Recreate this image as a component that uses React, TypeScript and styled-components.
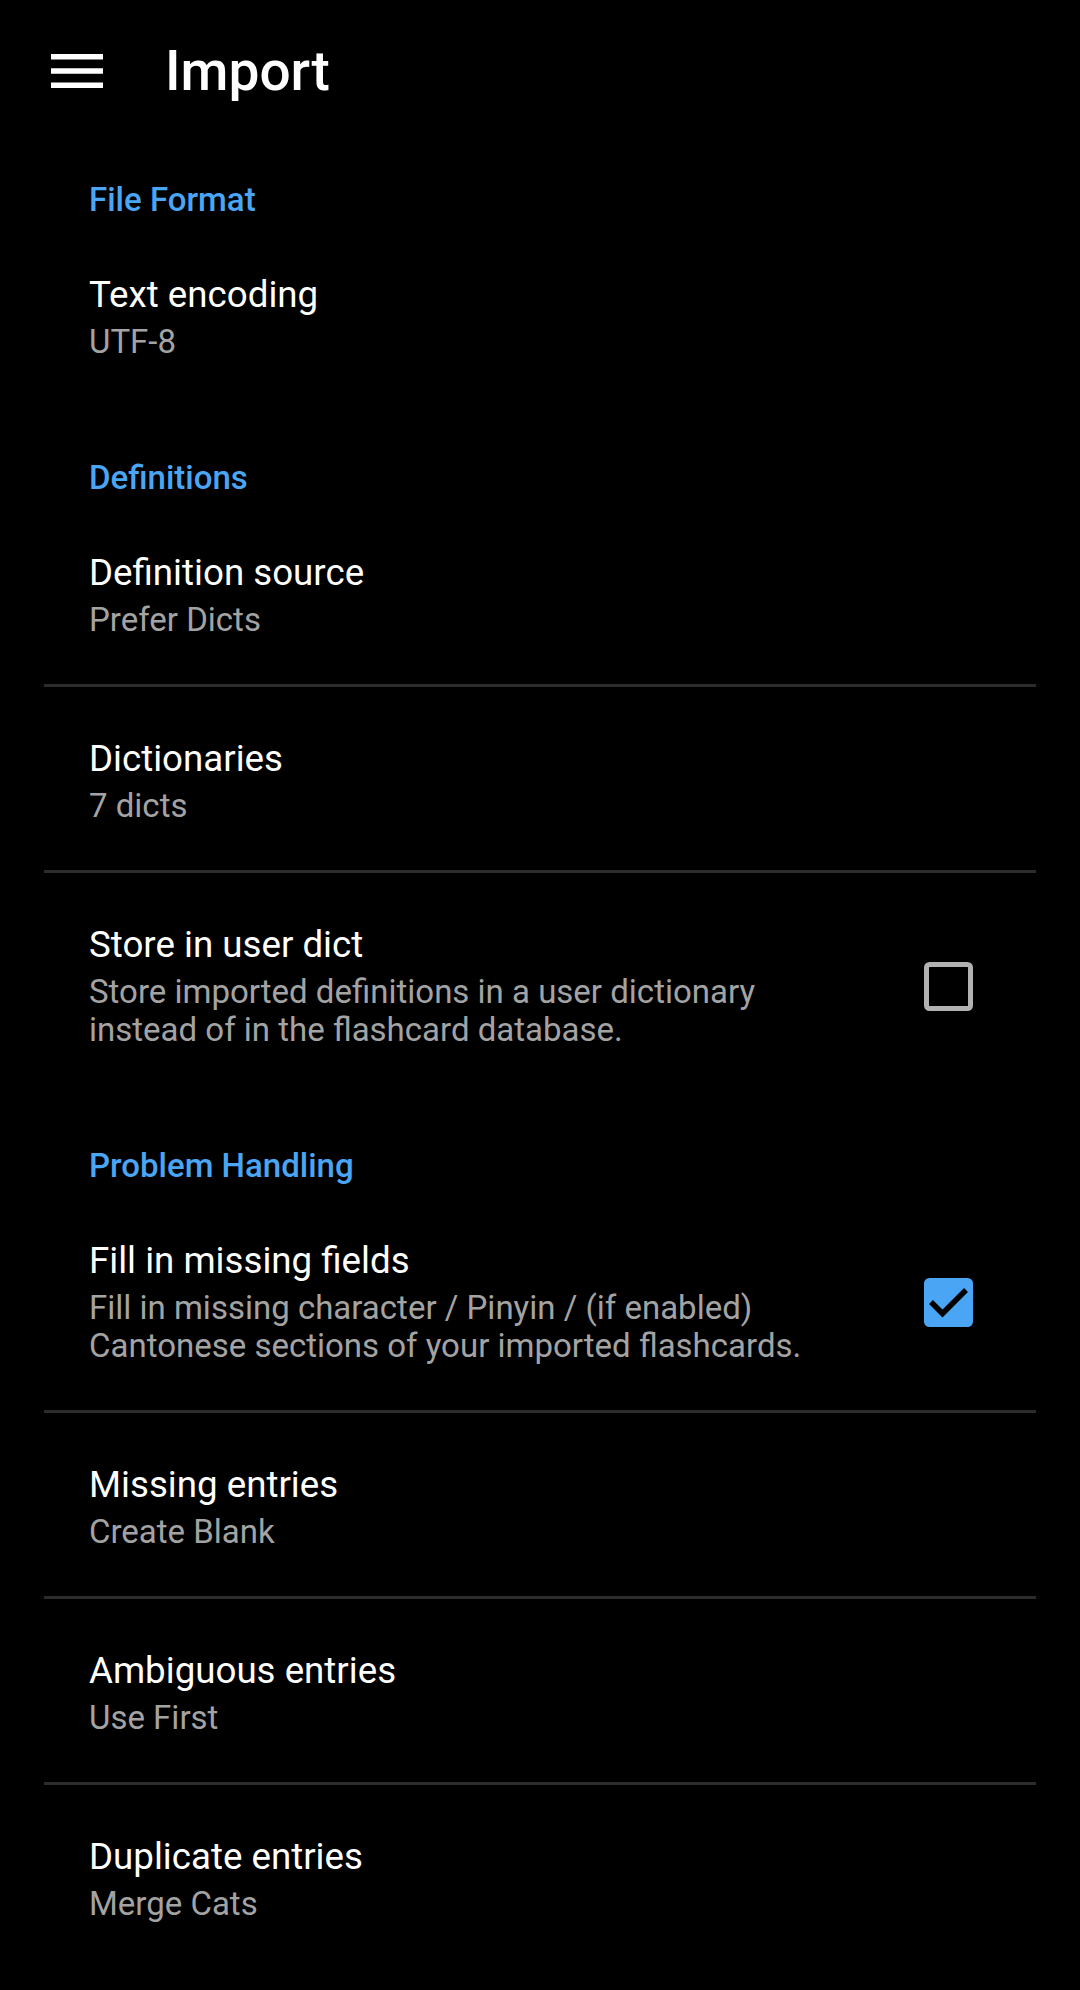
import styled, { createGlobalStyle } from "styled-components";

const GlobalStyle = createGlobalStyle`
  html, body {
    margin: 0;
    padding: 0;
    background: #000;
  }
  body {
    font-family: Roboto, "Noto Sans", "Liberation Sans", sans-serif;
    color: #fff;
    -webkit-font-smoothing: antialiased;
  }
`;

type Item = {
  title: string;
  summary: string;
  checkbox?: "on" | "off";
};

type Section = {
  name: string;
  items: Item[];
};

const sections: Section[] = [
  {
    name: "File Format",
    items: [{ title: "Text encoding", summary: "UTF-8" }],
  },
  {
    name: "Definitions",
    items: [
      { title: "Definition source", summary: "Prefer Dicts" },
      { title: "Dictionaries", summary: "7 dicts" },
      {
        title: "Store in user dict",
        summary:
          "Store imported definitions in a user dictionary instead of in the flashcard database.",
        checkbox: "off",
      },
    ],
  },
  {
    name: "Problem Handling",
    items: [
      {
        title: "Fill in missing fields",
        summary:
          "Fill in missing character / Pinyin / (if enabled) Cantonese sections of your imported flashcards.",
        checkbox: "on",
      },
      { title: "Missing entries", summary: "Create Blank" },
      { title: "Ambiguous entries", summary: "Use First" },
      { title: "Duplicate entries", summary: "Merge Cats" },
    ],
  },
];

const MenuIcon = () => (
  <svg width="52" height="34" viewBox="0 0 52 34">
    <rect x="0" y="0" width="52" height="5.5" fill="#fff" />
    <rect x="0" y="14.25" width="52" height="5.5" fill="#fff" />
    <rect x="0" y="28.5" width="52" height="5.5" fill="#fff" />
  </svg>
);

const CheckBox = ({ on }: { on: boolean }) =>
  on ? (
    <svg width="49" height="49" viewBox="0 0 49 49">
      <rect x="0" y="0" width="49" height="49" rx="5.5" fill="#4aa6f5" />
      <polyline
        points="7,24 18.5,35.5 42,12"
        fill="none"
        stroke="#000"
        strokeWidth="5.5"
      />
    </svg>
  ) : (
    <EmptyBox />
  );

function App() {
  return (
    <>
      <GlobalStyle />
      <Screen>
        <Toolbar>
          <NavButton>
            <MenuIcon />
          </NavButton>
          <Title>Import</Title>
        </Toolbar>
        <List>
          {sections.map((section, si) => (
            <div key={section.name}>
              <Category first={si === 0}>{section.name}</Category>
              {section.items.map((item, ii) => (
                <Row key={item.title} divided={ii > 0}>
                  <TextCol>
                    <ItemTitle>{item.title}</ItemTitle>
                    <Summary>{item.summary}</Summary>
                  </TextCol>
                  {item.checkbox && (
                    <Widget>
                      <CheckBox on={item.checkbox === "on"} />
                    </Widget>
                  )}
                </Row>
              ))}
            </div>
          ))}
        </List>
      </Screen>
    </>
  );
}

const Screen = styled.div`
  width: 1080px;
  min-height: 1990px;
  background: #000;
`;

const Toolbar = styled.div`
  height: 142px;
  display: flex;
  align-items: center;
`;

const NavButton = styled.div`
  width: 52px;
  height: 34px;
  margin-left: 51px;
  display: flex;
`;

const Title = styled.div`
  margin-left: 62px;
  font-size: 55px;
  line-height: 1;
  font-weight: 500;
  color: #fff;
`;

const List = styled.div`
  margin: 0 44px;
`;

const Category = styled.div<{ first?: boolean }>`
  padding: ${(p) => (p.first ? "39px" : "53px")} 0 4px 45px;
  font-size: 33px;
  line-height: 38px;
  font-weight: 500;
  color: #4aa6f5;
`;

const Row = styled.div<{ divided?: boolean }>`
  display: flex;
  align-items: center;
  padding: 50px 0 45px 45px;
  border-top: ${(p) => (p.divided ? "3px solid #2c2c2c" : "none")};
`;

const TextCol = styled.div`
  flex: 1;
  min-width: 0;
`;

const ItemTitle = styled.div`
  font-size: 36.7px;
  line-height: 44px;
  color: #fff;
`;

const Summary = styled.div`
  margin-top: 6px;
  font-size: 33px;
  line-height: 38px;
  color: #a3a3a3;
`;

const Widget = styled.div`
  width: 176px;
  flex-shrink: 0;
  display: flex;
  justify-content: center;
`;

const EmptyBox = styled.div`
  width: 49px;
  height: 49px;
  box-sizing: border-box;
  border: 5.5px solid #b2b2b2;
  border-radius: 5.5px;
`;

export default App;
